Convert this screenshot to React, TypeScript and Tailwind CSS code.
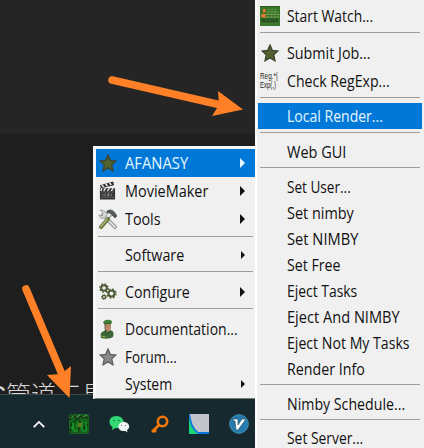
import React, { useLayoutEffect, useRef, useState } from "react";

const STAR = "M12 1.500l3 7 7.500.8-5.500 5.200 1.600 7.800L12 18.500l-6.600 3.800L7 14.500 1.500 9.300 9 8.500z";

function Label({ text, width }: { text: string; width: number }) {
  const ref = useRef<HTMLSpanElement>(null);
  const [scale, setScale] = useState(0.93);
  useLayoutEffect(() => {
    if (ref.current) setScale(width / ref.current.offsetWidth);
  }, [width, text]);
  return (
    <span ref={ref} className="inline-block origin-left whitespace-nowrap" style={{ transform: `scaleX(${scale})` }}>
      {text}
    </span>
  );
}

function Star({ gray = false }: { gray?: boolean }) {
  return (
    <svg viewBox="0 0 24 24" className="size-[18px]">
      <path d={STAR} fill={gray ? "#898989" : "#526130"} stroke={gray ? "#606060" : "#3d4430"} strokeWidth="1.800" />
    </svg>
  );
}

function Clapper() {
  return (
    <svg viewBox="0 0 18 20" className="mr-px h-5 w-[17px]">
      <path d="M1 4L15 0l1 4L2 7z" fill="#333" />
      <path d="M3 3.500l2 2.300M7 2.300l2 2.500M11 1.200l2 2.500" stroke="#eee" strokeWidth="1.500" />
      <path d="M1 7h16v12H1z" fill="#343434" />
      <path d="M3 7l-1 3M7 7l-2 3M11 7l-2 3M15 7l-2 3" stroke="#eee" strokeWidth="1.400" />
      <path d="M2 11h14M2 16.500h14" stroke="#777" strokeWidth=".7" />
      <path d="M3 14h2M6.500 12.500v3M9 13h2l-2 2h2M13 13v2" stroke="#aaa" strokeWidth=".8" fill="none" />
    </svg>
  );
}

function Tools() {
  return (
    <svg viewBox="0 0 20 20" className="size-5">
      <path d="M5 6l12 12" stroke="#777" strokeWidth="3.600" strokeLinecap="round" />
      <path d="M5 6l12 12" stroke="#dedede" strokeWidth="2.200" strokeLinecap="round" />
      <path d="M2 1l3 3-1 3-3-1c0 3 3 4 6 3l2-3c0-3-3-5-7-5z" fill="#d5d5d5" stroke="#888" strokeWidth=".7" />
      <path d="M14 5L9 12" stroke="#aaa" strokeWidth="2" />
      <path d="M10 10l-7 8" stroke="#65743c" strokeWidth="4" strokeLinecap="round" />
      <path d="M9 10.500l-6 7" stroke="#a1b068" strokeWidth="1.900" strokeLinecap="round" />
      <path d="M9 2c3-2 6-1 8 2l2 3-2 2-3-3c-1-2-2-2-5-2z" fill="#555c60" stroke="#343a3d" strokeWidth=".6" />
    </svg>
  );
}

function Gears() {
  return (
    <svg viewBox="0 0 18 18" className="size-[18px]" fill="none" stroke="#4b5a32">
      <circle cx="5" cy="5" r="2.800" strokeWidth="2" />
      <circle cx="5" cy="5" r="4.200" strokeWidth="1.300" strokeDasharray="1.700 1.600" />
      <circle cx="12.500" cy="10.500" r="3" strokeWidth="2" />
      <circle cx="12.500" cy="10.500" r="4.500" strokeWidth="1.300" strokeDasharray="1.800 1.740" />
      <circle cx="5" cy="14" r="1.600" strokeWidth="1.400" />
      <circle cx="5" cy="14" r="2.500" strokeWidth=".9" strokeDasharray="1 .96" />
    </svg>
  );
}

function Soldier() {
  return (
    <svg viewBox="0 0 16 20" className="mr-[3px] h-5 w-4">
      <path d="M2 19c-1-4 0-6 3-7l2-1h4c4 1 4 4 3 7-3 2-8 2-12 1z" fill="#3d6838" />
      <path d="M6 4h6v4.500c0 2-1 3.500-2 4L8 14l-1-3-1-2z" fill="#b9886a" />
      <path d="M6 5v5l1.500 2" stroke="#5a4030" strokeWidth=".8" fill="none" />
      <path d="M4 3.500C5 1 8 .5 11 1c2 .5 2.500 2 1.500 3.500L5 5z" fill="#3f8038" />
      <path d="M5 5l7-.6" stroke="#284428" strokeWidth=".7" />
      <path d="M6 11l2.500 4 2-3" stroke="#244a28" fill="none" />
      <path d="M2.500 17l4 1" stroke="#b7ae46" strokeWidth=".9" />
    </svg>
  );
}

function Watch() {
  return (
    <svg viewBox="0 0 20 20" className="size-5">
      <path fill="#387429" d="M0 0h20v20H0z" />
      <path d="M0 .5h20" stroke="#2c581f" />
      <path d="M3 3h2.500v3.500H3zM1.500 8h4v3.500h-4z" fill="#f07a32" />
      <path d="M7 6h11M6 8.500h13M6 11h13" stroke="#93aa60" strokeWidth=".9" strokeDasharray="3 .7" />
      <path d="M8 3.500h8" stroke="#5f9846" strokeDasharray="2 1" />
      <path d="M1 13.500h18M2 15.500h16" stroke="#284522" strokeWidth="1.400" strokeDasharray="4 .5" />
      <path d="M1 18h18" stroke="#52873b" strokeDasharray="1 1" />
    </svg>
  );
}

function RegExpIcon() {
  return (
    <div className="flex w-5 shrink-0 flex-col pb-px font-['Liberation_Sans',sans-serif] text-[8.500px] leading-[9px] text-[#222]">
      <Label text="Reg.*|" width={15} />
      <Label text="Exp(,)" width={14} />
    </div>
  );
}

type Item = { text: string; width: number; icon?: React.ReactNode; row: string; active?: boolean; arrow?: boolean };

function Row({ item, sub = false }: { item: Item; sub?: boolean }) {
  return (
    <div className={`flex shrink-0 items-center ${item.row} ${item.active ? "bg-[#0078d7] text-[#e6f6ff]" : "text-[#111]"}`}>
      <div className={`flex w-[29px] shrink-0 items-center ${sub ? "pl-0.5" : "justify-center pr-[5px]"}`}>{item.icon}</div>
      <div className="flex-1"><Label text={item.text} width={item.width} /></div>
      {item.arrow && (
        <svg viewBox="0 0 5 10" preserveAspectRatio="none" className={`mr-[10px] shrink-0 ${item.row === "h-[26px]" ? "h-[8px] w-[4px]" : "h-[10px] w-[5px]"}`}>
          <path d="M0 0l5 5-5 5z" fill="currentColor" />
        </svg>
      )}
    </div>
  );
}

function Rule({ className }: { className: string }) {
  return <div className={`h-px shrink-0 border-t border-[#9c9c9c] ${className}`} />;
}

const main: (Item | null)[] = [
  { text: "AFANASY", width: 63, icon: <Star />, row: "h-7", active: true, arrow: true },
  { text: "MovieMaker", width: 83, icon: <Clapper />, row: "h-7", arrow: true },
  { text: "Tools", width: 36, icon: <Tools />, row: "h-7", arrow: true },
  null,
  { text: "Software", width: 59, row: "h-[26px]", arrow: true },
  null,
  { text: "Configure", width: 65, icon: <Gears />, row: "h-7", arrow: true },
  null,
  { text: "Documentation...", width: 113, icon: <Soldier />, row: "h-7" },
  { text: "Forum...", width: 52, icon: <Star gray />, row: "h-7" },
  { text: "System", width: 47, row: "h-[26px]", arrow: true },
];

const sub: (Item | null)[] = [
  { text: "Start Watch...", width: 86, icon: <Watch />, row: "h-7" },
  null,
  { text: "Submit Job...", width: 84, icon: <div className="pl-px"><Star /></div>, row: "h-7" },
  { text: "Check RegExp...", width: 103, icon: <RegExpIcon />, row: "h-7" },
  null,
  { text: "Local Render...", width: 96, row: "h-[26px]", active: true },
  null,
  { text: "Web GUI", width: 59, row: "h-[26px]" },
  null,
  { text: "Set User...", width: 64, row: "h-[26px]" },
  { text: "Set nimby", width: 67, row: "h-[26px]" },
  { text: "Set NIMBY", width: 71, row: "h-[26px]" },
  { text: "Set Free", width: 54, row: "h-[26px]" },
  { text: "Eject Tasks", width: 70, row: "h-[26px]" },
  { text: "Eject And NIMBY", width: 113, row: "h-[26px]" },
  { text: "Eject Not My Tasks", width: 123, row: "h-[26px]" },
  { text: "Render Info", width: 78, row: "h-[26px]" },
  null,
  { text: "Nimby Schedule...", width: 118, row: "h-[26px]" },
  null,
  { text: "Set Server...", width: 76, row: "h-[22px]" },
];

const mainRules: Record<number, string> = {
  3: "mx-[2px] mt-[3px] mb-[5px]",
  5: "mx-[2px] mt-[3px] mb-[6px]",
  7: "mx-[2px] mt-[2px] mb-[6px]",
};

const subRules: Record<number, string> = {
  1: "mx-[2px] mt-[2px] mb-[6px]",
  4: "mx-[2px] mt-[2px] mb-[5px]",
  6: "mx-[2px] mt-[3px] mb-[6px]",
  8: "mx-[2px] mt-[2px] mb-[6px]",
  17: "mx-[2px] mt-[2px] mb-[6px]",
  19: "mx-[2px] mt-[2px] mb-[7px]",
};

function Taskbar() {
  return (
    <div className="flex h-[54px] shrink-0 items-center border-t border-[#3b474a] bg-[#16292e] pt-[5px]">
      <svg viewBox="0 0 16 10" className="ml-8 h-[9px] w-[14px]" fill="none">
        <path d="M2 8l6-6 6 6" stroke="#fff" strokeWidth="2" />
      </svg>
      <svg viewBox="0 0 20 20" className="ml-[23px] size-5">
        <rect width="20" height="20" rx="2" fill="#176421" />
        <path d="M1 6c2-7 5-5 6-1s4-5 6-2 3-3 6 2M1 19c2-8 0-9 4-11s3 8 1 11m3 0l2-11 3 8m1 3c0-8 2-11 4-7" stroke="#17340f" strokeWidth="1.500" fill="none" />
        <path d="M2 4l3-3M8 3l3-2m3 2l4-2" stroke="#78a875" strokeWidth=".7" />
        <path d="M4 8v8m4-9v11m5-11v9m4-8v9M2 13l5 5m5-4l4 4" stroke="#13a629" strokeWidth="1.200" />
        <path d="M9 9h4v4H9z" fill="#5d7b16" />
      </svg>
      <svg viewBox="0 0 20 17" className="ml-5 h-[17px] w-[21px]">
        <path d="M7 0C-1 0-2 8 3 11l-.5 3L6 12c13 0 9-12 1-12z" fill="#32d875" />
        <circle cx="4.500" cy="4.500" r=".8" fill="#126b3b" /><circle cx="9.500" cy="4.500" r=".8" fill="#126b3b" />
        <path d="M14 6c-6 0-7 8-1 9h3l2 1.500-.5-2.500C22 11 19 6 14 6z" fill="#eef2f0" />
        <circle cx="12" cy="9.500" r=".6" fill="#778" /><circle cx="16" cy="9.500" r=".6" fill="#778" />
      </svg>
      <svg viewBox="0 0 20 20" className="ml-[20px] size-5" fill="none" stroke="#f5780a">
        <circle cx="12.500" cy="7.500" r="4.700" strokeWidth="2.600" />
        <path d="M9 11l-7 7M3 15l3 3" strokeWidth="2.600" />
      </svg>
      <svg viewBox="0 0 20 20" className="ml-[19px] size-5">
        <path fill="#c3c4ca" d="M0 0h20v20H0z" />
        <path d="M0 1l3 10 5 9H0z" fill="#18d77a" />
        <path d="M0 0c2 10 3 14 9 19h11" stroke="#0878dc" strokeWidth="1.800" fill="none" />
      </svg>
      <svg viewBox="0 0 20 20" className="ml-5 size-5">
        <circle cx="10" cy="10" r="9.300" fill="#267aae" stroke="#4594bb" />
        <path d="M4 5h5v6l4-6h4L9 16H7L6 7H4z" fill="#fff" stroke="#12445d" strokeWidth=".6" />
      </svg>
    </div>
  );
}

export default function App() {
  return (
    <main className="relative h-[448px] w-[424px] overflow-hidden bg-[#1e1e1e] font-['Open_Sans','Noto_Sans',sans-serif] text-[15.500px] leading-5">
      <div className="flex h-full flex-col">
        <div className="h-[134px] shrink-0 bg-[#252525]" />
        <div className="flex flex-1 flex-col justify-end overflow-hidden">
          <div className="-ml-[12px] h-[13px] overflow-hidden whitespace-nowrap font-['Liberation_Sans','Noto_Sans_CJK_SC',sans-serif] text-[25px] font-light leading-[28px] text-[#d8d8d8]">
            C管道工具
          </div>
        </div>
        <Taskbar />
      </div>

      <section className="absolute left-[93px] top-[146px] flex h-[253px] w-[162px] flex-col border-b border-l-[3px] border-t-[3px] border-b-[#777] border-l-[#f8f8f8] border-t-[#f8f8f8] bg-[#f0f0f0]">
        {main.map((item, i) =>
          item ? <Row key={i} item={item} /> : <Rule key={i} className={mainRules[i]} />
        )}
      </section>

      <section className="absolute left-[255px] top-0 flex h-[448px] w-[169px] flex-col overflow-hidden border-l-2 border-[#fcfcfc] bg-[#f0f0f0] pl-px pr-[2px] pt-[2px]">
        {sub.map((item, i) =>
          item ? <Row key={i} item={item} sub /> : <Rule key={i} className={subRules[i]} />
        )}
      </section>

      <svg viewBox="0 0 424 448" className="pointer-events-none absolute inset-0 size-full" fill="#ff8027" stroke="#ff8027">
        <path d="M112 80L221 105" strokeWidth="7.500" strokeLinecap="round" />
        <path d="M218 91l25 18.500-31 6.500 7-11z" stroke="none" />
        <path d="M26 289l35 83" strokeWidth="7.500" strokeLinecap="round" />
        <path d="M71 366l-1.500 32L47 375l14-1z" stroke="none" />
      </svg>
    </main>
  );
}
